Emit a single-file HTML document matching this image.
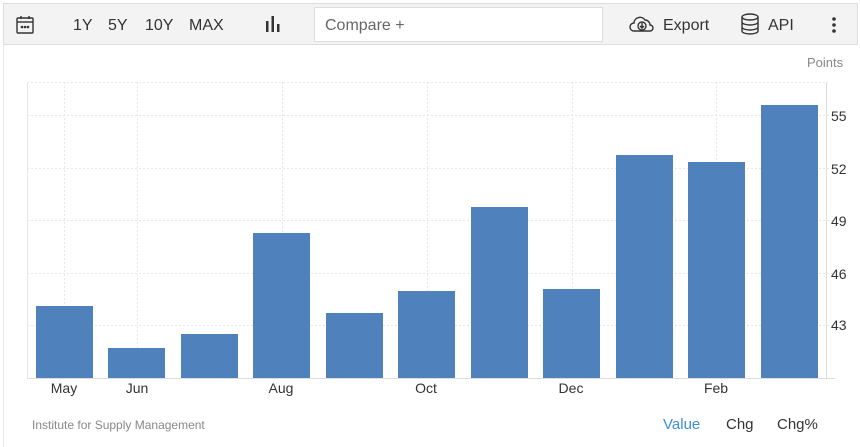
<!DOCTYPE html><html><head><style>
body{margin:0;width:860px;height:447px;background:#fff;font-family:"Liberation Sans",Arial,sans-serif;position:relative;overflow:hidden}
.tb{position:absolute;left:3px;top:3px;width:853px;height:40px;background:#f3f3f3;border:1px solid #ddd}
.t{position:absolute;top:17px;font-size:16px;color:#333}
.side{position:absolute;left:3px;top:44px;width:1px;height:403px;background:#e8e8e8}
.bar{position:absolute;background:#4f81bd;width:57px}
.ml{position:absolute;top:380px;font-size:14px;color:#333;transform:translateX(-50%)}
.yl{position:absolute;left:831px;font-size:14px;color:#333}
</style></head><body>
<div class="tb"></div>
<svg style="position:absolute;left:15px;top:15px" width="20" height="20" viewBox="0 0 20 20" fill="none" stroke="#333" stroke-width="1.4"><rect x="2" y="3" width="16" height="15" rx="1"/><line x1="2" y1="7" x2="18" y2="7"/><line x1="6" y1="1" x2="6" y2="4"/><line x1="14" y1="1" x2="14" y2="4"/><circle cx="7" cy="12" r=".6" fill="#333"/><circle cx="10" cy="12" r=".6" fill="#333"/><circle cx="13" cy="12" r=".6" fill="#333"/></svg>
<span class="t" style="left:73px">1Y</span><span class="t" style="left:108px">5Y</span><span class="t" style="left:145px">10Y</span><span class="t" style="left:189px">MAX</span>
<svg style="position:absolute;left:265px;top:15px" width="16" height="18"><rect x="1" y="6" width="2.5" height="11" fill="#333"/><rect x="6.5" y="1" width="2.5" height="16" fill="#333"/><rect x="12" y="9" width="2.5" height="8" fill="#333"/></svg>
<div style="position:absolute;left:314px;top:7px;width:287px;height:33px;background:#fff;border:1px solid #ddd"></div>
<span class="t" style="left:325px;color:#666">Compare +</span>
<svg style="position:absolute;left:629px;top:14px" width="26" height="20" viewBox="0 0 26 20" fill="none" stroke="#333" stroke-width="1.4"><path d="M7 17H5a4 4 0 0 1 0-8 6 6 0 0 1 11-3 5 5 0 0 1 5 5 3 3 0 0 1 0 6H7z"/><circle cx="13" cy="12" r="4"/><path d="M13 9v5M11 12l2 2 2-2"/></svg>
<span class="t" style="left:663px">Export</span>
<svg style="position:absolute;left:740px;top:13px" width="20" height="22" viewBox="0 0 20 22" fill="none" stroke="#333" stroke-width="1.4"><ellipse cx="10" cy="4" rx="8" ry="3"/><path d="M2 4v14c0 1.7 3.6 3 8 3s8-1.3 8-3V4M2 9c0 1.7 3.6 3 8 3s8-1.3 8-3M2 14c0 1.7 3.6 3 8 3s8-1.3 8-3"/></svg>
<span class="t" style="left:768px">API</span>
<svg style="position:absolute;left:831px;top:16px" width="6" height="18"><circle cx="3" cy="3" r="1.8" fill="#333"/><circle cx="3" cy="9" r="1.8" fill="#333"/><circle cx="3" cy="15" r="1.8" fill="#333"/></svg>
<div class="side"></div>
<span style="position:absolute;left:807px;top:55px;font-size:13px;color:#888">Points</span>
<svg style="position:absolute;left:0;top:0" width="860" height="447">
<g stroke="#e8e8e8" stroke-dasharray="2,2" stroke-width="1">
<line x1="27" y1="82.5" x2="827" y2="82.5"/>
<line x1="27" y1="115.5" x2="835" y2="115.5"/><line x1="27" y1="168.5" x2="835" y2="168.5"/><line x1="27" y1="220.5" x2="835" y2="220.5"/><line x1="27" y1="273.5" x2="835" y2="273.5"/><line x1="27" y1="325.5" x2="835" y2="325.5"/>
<line x1="64.5" y1="82" x2="64.5" y2="378"/><line x1="137.5" y1="82" x2="137.5" y2="378"/><line x1="282.5" y1="82" x2="282.5" y2="378"/><line x1="427.5" y1="82" x2="427.5" y2="378"/><line x1="572.5" y1="82" x2="572.5" y2="378"/><line x1="716.5" y1="82" x2="716.5" y2="378"/>
</g>
<line x1="27.5" y1="82" x2="27.5" y2="378" stroke="#e6e6e6"/>
<line x1="826.5" y1="82" x2="826.5" y2="378" stroke="#ddd"/>
<line x1="27" y1="378.5" x2="835" y2="378.5" stroke="#ddd"/>
</svg>
<div class="bar" style="left:36px;top:306px;height:72px"></div>
<div class="bar" style="left:108px;top:348px;height:30px"></div>
<div class="bar" style="left:181px;top:334px;height:44px"></div>
<div class="bar" style="left:253px;top:233px;height:145px"></div>
<div class="bar" style="left:326px;top:313px;height:65px"></div>
<div class="bar" style="left:398px;top:291px;height:87px"></div>
<div class="bar" style="left:471px;top:207px;height:171px"></div>
<div class="bar" style="left:543px;top:289px;height:89px"></div>
<div class="bar" style="left:616px;top:155px;height:223px"></div>
<div class="bar" style="left:688px;top:162px;height:216px"></div>
<div class="bar" style="left:761px;top:105px;height:273px"></div>
<span class="ml" style="left:64px">May</span><span class="ml" style="left:137px">Jun</span><span class="ml" style="left:281px">Aug</span><span class="ml" style="left:426px">Oct</span><span class="ml" style="left:571px">Dec</span><span class="ml" style="left:716px">Feb</span>
<span class="yl" style="top:108px">55</span><span class="yl" style="top:161px">52</span><span class="yl" style="top:213px">49</span><span class="yl" style="top:266px">46</span><span class="yl" style="top:317px">43</span>
<span style="position:absolute;left:32px;top:418px;font-size:12px;color:#888">Institute for Supply Management</span>
<span style="position:absolute;left:663px;top:416px;font-size:15px;color:#3b8fd9">Value</span>
<span style="position:absolute;left:726px;top:416px;font-size:15px;color:#333">Chg</span>
<span style="position:absolute;left:777px;top:416px;font-size:15px;color:#333">Chg%</span>
</body></html>
